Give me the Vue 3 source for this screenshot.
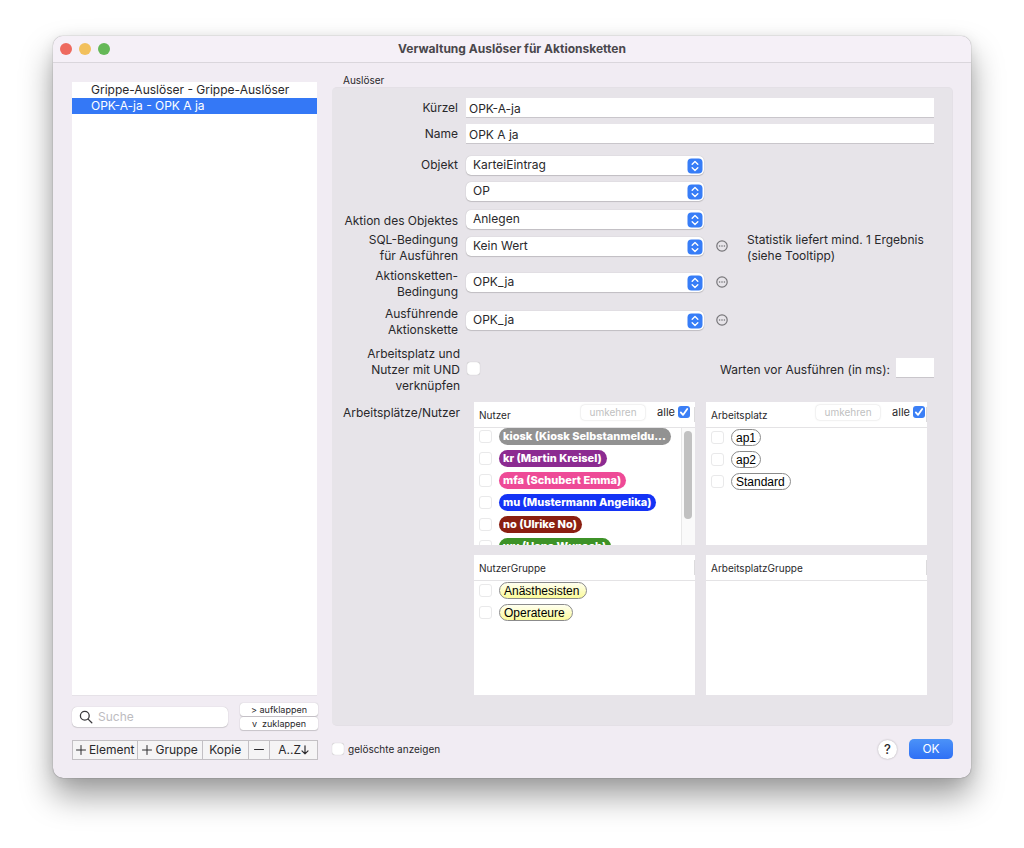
<script setup>
import { ref } from 'vue'

const triggers = ['Grippe-Auslöser - Grippe-Auslöser', 'OPK-A-ja - OPK A ja']
const selected = ref(1)
const shortName = ref('OPK-A-ja')
const fullName = ref('OPK A ja')

const selects = [
  { id: 'objekt', label: 'Objekt', value: 'KarteiEintrag', kind: 'first' },
  { id: 'typ', label: '', aria: 'Objekttyp', value: 'OP', kind: '' },
  { id: 'aktion', label: 'Aktion des Objektes', value: 'Anlegen', kind: 'action' },
  { id: 'sql', label: 'SQL-Bedingung\nfür Ausführen', value: 'Kein Wert', kind: 'double', more: true, hint: 'Statistik liefert mind. 1 Ergebnis\n(siehe Tooltipp)' },
  { id: 'bedingung', label: 'Aktionsketten-\nBedingung', value: 'OPK_ja', kind: 'double near', more: true },
  { id: 'kette', label: 'Ausführende\nAktionskette', value: 'OPK_ja', kind: 'double far', more: true },
]

const lists = [
  {
    title: 'Nutzer', all: true, scroll: true, look: 'user',
    items: [
      { text: 'kiosk (Kiosk Selbstanmeldu...', tone: 'gray' },
      { text: 'kr (Martin Kreisel)', tone: 'purple' },
      { text: 'mfa (Schubert Emma)', tone: 'pink' },
      { text: 'mu (Mustermann Angelika)', tone: 'blue' },
      { text: 'no (Ulrike No)', tone: 'brown' },
      { text: 'wu (Hans Wunsch)', tone: 'green' },
    ],
  },
  {
    title: 'Arbeitsplatz', all: true, look: 'plain',
    items: [{ text: 'ap1' }, { text: 'ap2' }, { text: 'Standard', tone: 'wide' }],
  },
  {
    title: 'NutzerGruppe', look: 'plain',
    items: [{ text: 'Anästhesisten', tone: 'wide yellow' }, { text: 'Operateure', tone: 'wide yellow' }],
  },
  { title: 'ArbeitsplatzGruppe', look: 'plain', items: [] },
]
</script>

<template>
  <main class="window">
    <header class="titlebar">
      <div class="lights">
        <button class="light red" aria-label="Schließen"></button>
        <button class="light amber" aria-label="Minimieren"></button>
        <button class="light lime" aria-label="Vergrößern"></button>
      </div>
      <h1>Verwaltung Auslöser für Aktionsketten</h1>
    </header>

    <div class="content">
      <aside class="side">
        <ul class="triggers">
          <li v-for="(t, i) in triggers" :key="t">
            <button :class="{ active: selected === i }" @click="selected = i">{{ t }}</button>
          </li>
        </ul>
        <div class="tools">
          <label class="search">
            <svg width="14" height="14" viewBox="0 0 14 14" fill="none" stroke="#3a393c" stroke-width="1.3" stroke-linecap="round">
              <circle cx="5.8" cy="5.8" r="4.4" />
              <path d="M9.1 9.1 12.8 12.8" />
            </svg>
            <input type="search" placeholder="Suche" aria-label="Suche" />
          </label>
          <div class="folds">
            <button>&gt; aufklappen</button>
            <button>v&nbsp; zuklappen</button>
          </div>
        </div>
        <div class="segments">
          <button class="s-element">
            <svg width="10" height="10" viewBox="0 0 10 10" stroke="#2d2c2f" stroke-linecap="round"><path d="M5 .5v9M.5 5h9" /></svg>Element
          </button>
          <button class="s-group">
            <svg width="10" height="10" viewBox="0 0 10 10" stroke="#2d2c2f" stroke-linecap="round"><path d="M5 .5v9M.5 5h9" /></svg>Gruppe
          </button>
          <button class="s-copy">Kopie</button>
          <button class="s-minus" aria-label="Entfernen">
            <svg width="10" height="10" viewBox="0 0 10 10" stroke="#2d2c2f" stroke-linecap="round"><path d="M.5 4.5h9" /></svg>
          </button>
          <button class="s-sort">
            A..Z<svg width="8" height="10" viewBox="0 0 8 10" fill="none" stroke="#2d2c2f" stroke-width="1.2" stroke-linecap="round" stroke-linejoin="round"><path d="M4 .8v8M1 5.8l3 3 3-3" /></svg>
          </button>
        </div>
      </aside>

      <section class="main">
        <h2>Auslöser</h2>
        <div class="panel">
          <div class="row">
            <label class="label" for="kuerzel">Kürzel</label>
            <input id="kuerzel" v-model="shortName" class="text" type="text" />
          </div>
          <div class="row">
            <label class="label" for="name">Name</label>
            <input id="name" v-model="fullName" class="text" type="text" />
          </div>

          <div v-for="s in selects" :key="s.id" class="row" :class="s.kind">
            <label class="label" :for="s.id">{{ s.label }}</label>
            <span class="popup">
              <select :id="s.id" :aria-label="s.aria">
                <option>{{ s.value }}</option>
              </select>
              <svg class="chevrons" width="16" height="16" viewBox="0 0 16 16">
                <rect x=".5" y=".5" width="15" height="15" rx="4" fill="#377df7" />
                <path d="M5.2 6.2 8 3.6l2.8 2.6M5.2 9.8 8 12.4l2.8-2.6" fill="none" stroke="#fff" stroke-width="1.4" stroke-linecap="round" stroke-linejoin="round" />
              </svg>
            </span>
            <button v-if="s.more" class="more" aria-label="Bearbeiten">
              <svg width="12" height="12" viewBox="0 0 12 12">
                <circle cx="6" cy="6" r="5.2" fill="none" stroke="#767579" stroke-width="1.2" />
                <circle cx="3.6" cy="6" r=".8" fill="#767579" />
                <circle cx="6" cy="6" r=".8" fill="#767579" />
                <circle cx="8.4" cy="6" r=".8" fill="#767579" />
              </svg>
            </button>
            <p v-if="s.hint" class="hint">{{ s.hint }}</p>
          </div>

          <div class="row link">
            <label class="label shifted" for="und">Arbeitsplatz und
Nutzer mit UND
verknüpfen</label>
            <input id="und" type="checkbox" class="check lifted" />
            <label class="wait-label" for="wait">Warten vor Ausführen (in ms):</label>
            <input id="wait" class="text wait lifted" type="text" />
          </div>

          <div class="row areas">
            <span class="label shifted">Arbeitsplätze/Nutzer</span>
            <div class="lists">
              <section v-for="l in lists" :key="l.title" class="list" :class="{ tall: l.all, scrolls: l.scroll }">
                <header>
                  <h3>{{ l.title }}</h3>
                  <template v-if="l.all">
                    <button class="invert" disabled>umkehren</button>
                    <label class="all">alle
                      <span class="tick">
                        <input type="checkbox" checked />
                        <svg width="12" height="12" viewBox="0 0 12 12" fill="none" stroke="#fff" stroke-width="1.8" stroke-linecap="round" stroke-linejoin="round"><path d="M2.8 6.4 5 8.9 9.2 3" /></svg>
                      </span>
                    </label>
                  </template>
                  <i class="divider"></i>
                </header>
                <div class="body">
                  <ul>
                    <li v-for="it in l.items" :key="it.text">
                      <label>
                        <input type="checkbox" class="check faint" />
                        <span class="pill" :class="[l.look, it.tone]">{{ it.text }}</span>
                      </label>
                    </li>
                  </ul>
                  <div v-if="l.scroll" class="scrollbar"><i></i></div>
                </div>
              </section>
            </div>
          </div>
        </div>

        <footer>
          <label class="deleted"><input type="checkbox" class="check small" />gelöschte anzeigen</label>
          <button class="help" aria-label="Hilfe">?</button>
          <button class="ok">OK</button>
        </footer>
      </section>
    </div>
  </main>
</template>

<style>
body {
  margin: 0;
  background: #fff;
}
</style>

<style scoped>
* {
  box-sizing: border-box;
}
.window {
  margin: 36px 53px 70px;
  border-radius: 10px;
  background: #f1ecf3;
  box-shadow: 0 0 1px rgba(0, 0, 0, 0.6), 0 18px 32px rgba(0, 0, 0, 0.38), 0 2px 14px rgba(0, 0, 0, 0.08);
  color: #29282b;
  font: 12px/16px Inter, "Liberation Sans", sans-serif;
}
button,
input,
select {
  margin: 0;
  padding: 0;
  border: 0;
  color: inherit;
  font: inherit;
}
h1, h2, h3, p, ul {
  margin: 0;
  padding: 0;
  font: inherit;
}
ul {
  list-style: none;
}
svg {
  flex: none;
  display: block;
}
.titlebar {
  display: grid;
  grid-template-columns: 1fr auto 1fr;
  align-items: center;
  height: 27px;
  padding: 0 7px;
  border-bottom: 1px solid #dad6dc;
  border-radius: 10px 10px 0 0;
  background: #f5f0f7;
}
.titlebar h1 {
  color: #49474b;
  font-size: 12px;
  font-weight: 700;
}
.lights {
  display: flex;
  gap: 7px;
}
.light {
  width: 12px;
  height: 12px;
  border-radius: 50%;
}
.red { background: #ee6a5f; }
.amber { background: #f2c05c; }
.lime { background: #65b857; }

.content {
  display: flex;
  gap: 14px;
  padding: 10px 18px 18px 19px;
}
.side {
  display: flex;
  flex: 0 0 246px;
  flex-direction: column;
  min-width: 0;
  padding-top: 9px;
}
.triggers {
  flex: 1;
  margin-right: 1px;
  border-bottom: 1px solid #e6e2e8;
  background: #fff;
}
.triggers button {
  display: block;
  width: 100%;
  height: 16px;
  padding-left: 19px;
  background: none;
  text-align: left;
}
.triggers .active {
  background: #3478f6;
  color: #fff;
}
.tools {
  display: flex;
  align-items: center;
  gap: 12px;
  padding-top: 7px;
}
.search {
  display: flex;
  flex: 1;
  align-items: center;
  gap: 5px;
  min-width: 0;
  height: 20px;
  padding-left: 7px;
  border-radius: 5px;
  background: #fff;
  box-shadow: 0 0 1px rgba(0, 0, 0, 0.25), 0 1px 1px rgba(0, 0, 0, 0.12);
}
.search input {
  flex: 1;
  min-width: 0;
  outline: 0;
  background: none;
  appearance: none;
}
.search input::placeholder {
  color: #bdbcbf;
}
.folds {
  display: flex;
  flex: 0 0 78px;
  flex-direction: column;
  gap: 1px;
}
.folds button {
  height: 13px;
  border-radius: 3px;
  background: #fff;
  box-shadow: 0 0 1px rgba(0, 0, 0, 0.3), 0 1px 1px rgba(0, 0, 0, 0.15);
  font-size: 9px;
  line-height: 13px;
}
.segments {
  display: flex;
  height: 20px;
  margin-top: 10px;
  border: 1px solid #c3c0c4;
  background: #f5f4f5;
}
.segments button {
  display: flex;
  align-items: center;
  justify-content: center;
  gap: 3px;
  min-width: 0;
  background: none;
  white-space: nowrap;
}
.segments button + button {
  border-left: 1px solid #c3c0c4;
}
.s-element { flex: 66; }
.s-group { flex: 65; }
.s-copy { flex: 46; }
.s-minus { flex: 21; }
.s-sort { flex: 48; }
.segments .s-sort { gap: 0; }

.main {
  flex: 1;
  min-width: 0;
}
.main h2 {
  height: 14px;
  padding-left: 11px;
  font-size: 10px;
  line-height: 14px;
}
.panel {
  padding: 7px 18px 30px 0;
  border: 1px solid #e4e0e6;
  border-left-width: 0;
  border-radius: 5px;
  background: #e7e4e9;
}
.row {
  display: flex;
  align-items: center;
  min-height: 26px;
}
.label {
  flex: 0 0 126px;
  margin-right: 8px;
  text-align: right;
  white-space: pre-line;
}
.label.shifted {
  flex-basis: 128px;
  margin-right: 7px;
}
.text {
  flex: 1;
  min-width: 0;
  height: 20px;
  padding: 2px 3px 0;
  border-bottom: 1px solid #c9c6cb;
  outline: 0;
  background: #fff;
}
.first { margin-top: 5px; }
.action { margin-top: 2px; }
.action .label { padding-top: 3px; }
.double { min-height: 32px; }
.near { margin-top: 4px; }
.far { margin-top: 6px; }
.popup {
  position: relative;
  flex: 0 0 238px;
  height: 19px;
  border-radius: 5px;
  background: #fff;
  box-shadow: 0 0 1px rgba(0, 0, 0, 0.25), 0 1px 1px rgba(0, 0, 0, 0.15);
}
.popup select {
  width: 100%;
  height: 18px;
  padding: 0 24px 0 7px;
  outline: 0;
  background: none;
  appearance: none;
}
.double .popup {
  margin-bottom: 3px;
}
.double .more {
  margin-bottom: 4px;
}
.chevrons {
  position: absolute;
  top: 2px;
  right: 1px;
  pointer-events: none;
}
.more {
  margin-left: 12px;
  background: none;
}
.hint {
  margin-left: 19px;
  white-space: pre;
}
.link {
  min-height: 48px;
  margin-top: 8px;
}
.lifted {
  margin-bottom: 4px;
}
.check {
  flex: none;
  width: 13px;
  height: 13px;
  border-radius: 3px;
  background: #fff;
  box-shadow: inset 0 0 1px rgba(0, 0, 0, 0.3), 0 0 1px rgba(0, 0, 0, 0.2);
  appearance: none;
}
.check.small {
  width: 12px;
  height: 12px;
}
.check.faint {
  border: 1px solid #e9e9ea;
  box-shadow: none;
}
.wait-label {
  flex: 1;
  margin-right: 6px;
  text-align: right;
}
.wait {
  flex: 0 0 38px;
}
.areas {
  align-items: flex-start;
  padding: 8px 7px 0 0;
}
.areas .label {
  margin-right: 14px;
  padding-top: 3px;
}
.lists {
  display: grid;
  flex: 1;
  grid-template-columns: 1fr 1fr;
  gap: 10px 11px;
}
.list {
  display: flex;
  flex-direction: column;
  min-width: 0;
  height: 140px;
  background: #fff;
}
.list.tall {
  height: 143px;
}
.list header {
  position: relative;
  display: flex;
  flex: none;
  align-items: center;
  height: 26px;
  padding: 0 2px 0 5px;
  border-bottom: 1px solid #e4e3e5;
}
.tall header {
  padding-bottom: 5px;
}
.scrolls header {
  padding-right: 5px;
}
.list h3 {
  flex: 1;
  font-size: 10px;
}
.tall h3 {
  padding-top: 5px;
}
.invert {
  width: 64px;
  height: 15px;
  border-radius: 4px;
  background: #fff;
  box-shadow: 0 0 2px rgba(0, 0, 0, 0.2);
  color: #c0bfc1;
  font-size: 10px;
  line-height: 15px;
}
.all {
  display: flex;
  align-items: center;
  gap: 3px;
  margin-left: 12px;
  font-size: 11px;
}
.tick {
  position: relative;
  display: flex;
}
.tick input {
  width: 12px;
  height: 12px;
  border-radius: 3px;
  background: #3b7ff6;
  appearance: none;
}
.tick input:not(:checked) {
  background: #ddd;
}
.tick svg {
  position: absolute;
  inset: 0;
  pointer-events: none;
}
.divider {
  position: absolute;
  right: 0;
  bottom: 5px;
  width: 1px;
  height: 15px;
  background: #dcdbdd;
}
.body {
  display: flex;
  flex: 1;
  min-height: 0;
  overflow: hidden;
}
.body ul {
  flex: 1;
  min-width: 0;
}
.body li {
  height: 22px;
}
.body li label {
  display: flex;
  align-items: center;
  gap: 7px;
  height: 18px;
  padding-left: 5px;
}
.scrolls .body li label {
  height: 16px;
}
.pill {
  height: 17px;
  padding: 0 4px;
  border-radius: 9px;
  white-space: nowrap;
}
.user {
  padding-right: 5px;
  color: #fff;
  font-size: 11px;
  font-weight: 800;
  line-height: 16px;
}
.plain {
  border: 1px solid #8b8b8b;
  color: #000;
  font: 12px/17px "Liberation Sans", sans-serif;
}
.wide { padding-right: 5px; }
.wide.yellow { padding-right: 7px; background: linear-gradient(#fffff0, #fbfb9b); }
.gray { background: #929292; }
.purple { background: #8c2b91; }
.pink { background: #ee4a97; }
.blue { background: #1433f5; }
.brown { background: #8a1f11; }
.green { background: #3d9227; }
.scrollbar {
  width: 14px;
  padding: 3px 3px 0 2px;
  border-left: 1px solid #e8e8e8;
  background: #fafafa;
}
.scrollbar i {
  display: block;
  height: 88px;
  border-radius: 4px;
  background: #c1c1c1;
}
footer {
  display: flex;
  align-items: center;
  margin-top: 13px;
  padding-bottom: 1px;
}
.deleted {
  display: flex;
  flex: 1;
  align-items: center;
  gap: 4px;
  font-size: 10px;
}
.help {
  width: 19px;
  height: 19px;
  border-radius: 50%;
  background: #fff;
  box-shadow: 0 0 2px rgba(0, 0, 0, 0.3);
  font-size: 13px;
  font-weight: 500;
}
.ok {
  width: 44px;
  height: 20px;
  margin-left: 12px;
  border-radius: 5px;
  background: linear-gradient(#4b92f8, #2f70f5);
  color: #fff;
}
</style>
